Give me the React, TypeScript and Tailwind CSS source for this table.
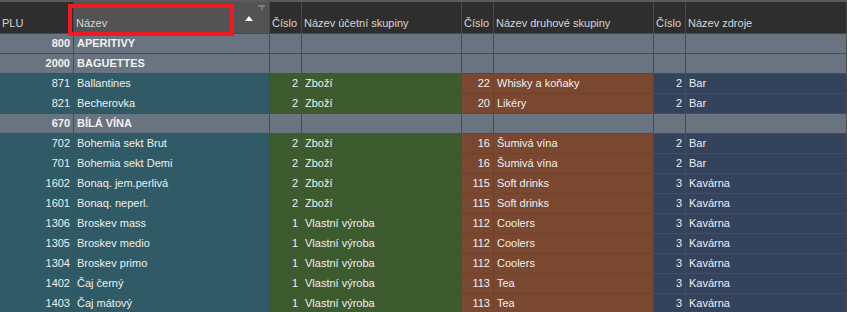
const cols = "grid grid-cols-[74px_196px_32px_160px_32px_160px_32px_161px]";

type Row =
  | { group: true; plu: string; name: string }
  | {
      group?: false;
      plu: string;
      name: string;
      uc: string;
      ucName: string;
      dr: string;
      drName: string;
      zd: string;
      zdName: string;
    };

const rows: Row[] = [
  { group: true, plu: "800", name: "APERITIVY" },
  { group: true, plu: "2000", name: "BAGUETTES" },
  { plu: "871", name: "Ballantines", uc: "2", ucName: "Zboží", dr: "22", drName: "Whisky a koňaky", zd: "2", zdName: "Bar" },
  { plu: "821", name: "Becherovka", uc: "2", ucName: "Zboží", dr: "20", drName: "Likéry", zd: "2", zdName: "Bar" },
  { group: true, plu: "670", name: "BÍLÁ VÍNA" },
  { plu: "702", name: "Bohemia sekt Brut", uc: "2", ucName: "Zboží", dr: "16", drName: "Šumivá vína", zd: "2", zdName: "Bar" },
  { plu: "701", name: "Bohemia sekt Demi", uc: "2", ucName: "Zboží", dr: "16", drName: "Šumivá vína", zd: "2", zdName: "Bar" },
  { plu: "1602", name: "Bonaq. jem.perlivá", uc: "2", ucName: "Zboží", dr: "115", drName: "Soft drinks", zd: "3", zdName: "Kavárna" },
  { plu: "1601", name: "Bonaq. neperl.", uc: "2", ucName: "Zboží", dr: "115", drName: "Soft drinks", zd: "3", zdName: "Kavárna" },
  { plu: "1306", name: "Broskev mass", uc: "1", ucName: "Vlastní výroba", dr: "112", drName: "Coolers", zd: "3", zdName: "Kavárna" },
  { plu: "1305", name: "Broskev medio", uc: "1", ucName: "Vlastní výroba", dr: "112", drName: "Coolers", zd: "3", zdName: "Kavárna" },
  { plu: "1304", name: "Broskev primo", uc: "1", ucName: "Vlastní výroba", dr: "112", drName: "Coolers", zd: "3", zdName: "Kavárna" },
  { plu: "1402", name: "Čaj černý", uc: "1", ucName: "Vlastní výroba", dr: "113", drName: "Tea", zd: "3", zdName: "Kavárna" },
  { plu: "1403", name: "Čaj mátový", uc: "1", ucName: "Vlastní výroba", dr: "113", drName: "Tea", zd: "3", zdName: "Kavárna" },
];

const cell = "h-[20px] border-r border-b border-[#4c4c4c] flex items-center whitespace-nowrap overflow-hidden";
const num = `${cell} justify-end pr-[3px]`;
const txt = `${cell} pl-[3px]`;

function Header() {
  const h = "h-[32px] border-r border-b border-[#4a4a4a] flex items-end pb-[4px] pl-[2px] whitespace-nowrap overflow-hidden";
  return (
    <div className={`${cols} bg-[#2e2e2e] text-[#d6d6d6] border-t-2 border-[#5a5a5a]`}>
      <div className={h}>PLU</div>
      <div className={`${h} relative bg-[#535353]`}>
        Název
        <span className="absolute right-[16px] top-[14px] w-0 h-0 border-l-[4px] border-r-[4px] border-b-[5px] border-l-transparent border-r-transparent border-b-white" />
        {/* filter funnel */}
        <svg className="absolute right-[4px] top-[3px]" width="7" height="6" viewBox="0 0 7 6">
          <path d="M0 0H7V2H5V4L4 5.5H3V2H0Z" fill="#7d7d7d" />
        </svg>
      </div>
      <div className={h}>Číslo</div>
      <div className={h}>Název účetní skupiny</div>
      <div className={h}>Číslo</div>
      <div className={h}>Název druhové skupiny</div>
      <div className={h}>Číslo</div>
      <div className={h}>Název zdroje</div>
    </div>
  );
}

export default function App() {
  return (
    <div className="relative w-[847px] h-[312px] overflow-hidden bg-[#2e2e2e] text-[11px] leading-none font-['Liberation_Sans',Arial,sans-serif]">
      <Header />
      {rows.map((r, i) =>
        r.group ? (
          <div key={i} className={`${cols} bg-[#6a7380] text-[#f2f2f2] font-bold`}>
            <div className={num}>{r.plu}</div>
            <div className={txt}>{r.name}</div>
            <div className={cell} />
            <div className={cell} />
            <div className={cell} />
            <div className={cell} />
            <div className={cell} />
            <div className={cell} />
          </div>
        ) : (
          <div key={i} className={`${cols} text-[#f0f0f0]`}>
            <div className={`${num} bg-[#2f5a66]`}>{r.plu}</div>
            <div className={`${txt} bg-[#2f5a66]`}>{r.name}</div>
            <div className={`${num} bg-[#3e5a2f]`}>{r.uc}</div>
            <div className={`${txt} bg-[#3e5a2f]`}>{r.ucName}</div>
            <div className={`${num} bg-[#7a4731]`}>{r.dr}</div>
            <div className={`${txt} bg-[#7a4731]`}>{r.drName}</div>
            <div className={`${num} bg-[#34435b]`}>{r.zd}</div>
            <div className={`${txt} bg-[#34435b]`}>{r.zdName}</div>
          </div>
        )
      )}
      {/* red highlight around the sorted column header */}
      <div className="absolute left-[68px] top-[4px] w-[166px] h-[32px] border-4 border-[#ed1c24] pointer-events-none" />
    </div>
  );
}
